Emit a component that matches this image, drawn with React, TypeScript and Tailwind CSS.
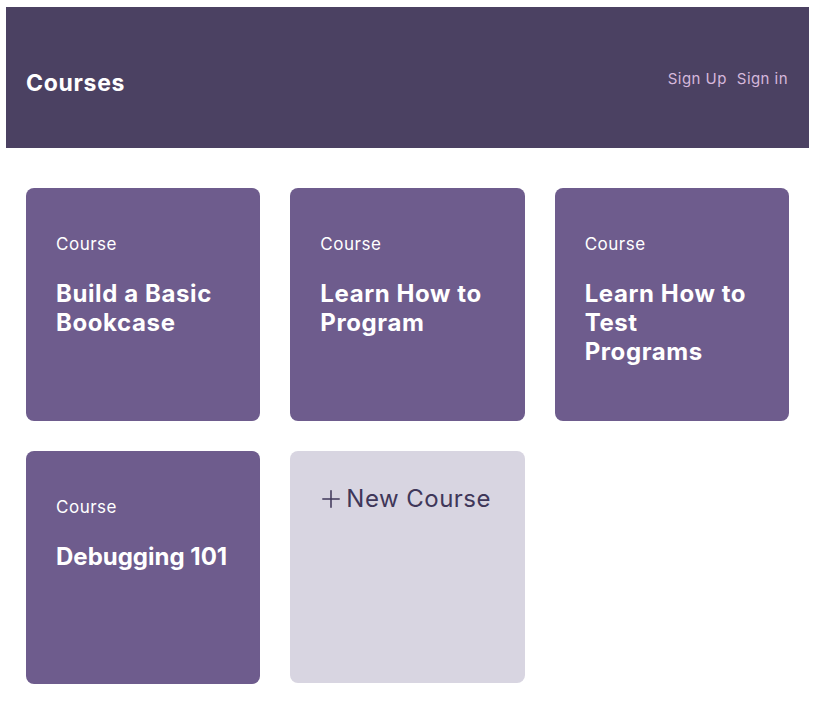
import React from "react";
import { Plus } from "lucide-react";

const courses = [
  { title: "Build a Basic Bookcase", tight: false },
  { title: "Learn How to Program", tight: false },
  { title: "Learn How to Test Programs", tight: false },
  { title: "Debugging 101", tight: true },
];

export default function App() {
  return (
    <div className="min-h-screen bg-white pt-[7px] px-[6px] font-['Inter',sans-serif]">
      {/* HEADER */}
      <header className="h-[141px] bg-[#4b4162] flex items-center justify-between pl-5 pr-[21px]">
        <h1 className="text-[23px] font-bold tracking-[0.03em] text-white mt-[11px]">
          Courses
        </h1>
        <nav className="flex gap-[10px] text-[15px] tracking-[0.03em] text-[#d6b8dc] mt-[3px]">
          <a href="#">Sign Up</a>
          <a href="#">Sign in</a>
        </nav>
      </header>

      {/* GRID DE CURSOS */}
      <main className="grid grid-cols-3 gap-[30px] pt-10 px-5">
        {courses.map((c) => (
          <a
            key={c.title}
            href="#"
            className="h-[233px] rounded-lg bg-[#6e5c8d] px-[30px] pt-[44px] text-white"
          >
            <p className="text-[17px] tracking-[0.03em] leading-6">Course</p>
            <h2
              className={
                c.tight
                  ? "mt-[23px] text-[24px] font-bold leading-[29px]"
                  : "mt-[23px] text-[24px] font-bold tracking-[0.025em] leading-[29px]"
              }
            >
              {c.title}
            </h2>
          </a>
        ))}
        <a
          href="#"
          className="h-[232px] rounded-lg bg-[#d8d5e1] px-[30px] pt-[30px] text-[#3f3759]"
        >
          <span className="flex items-center text-[24px] tracking-[0.02em]">
            <Plus size={28} strokeWidth={1.3} className="-ml-[3px] mr-[1px]" />
            New Course
          </span>
        </a>
      </main>
    </div>
  );
}
